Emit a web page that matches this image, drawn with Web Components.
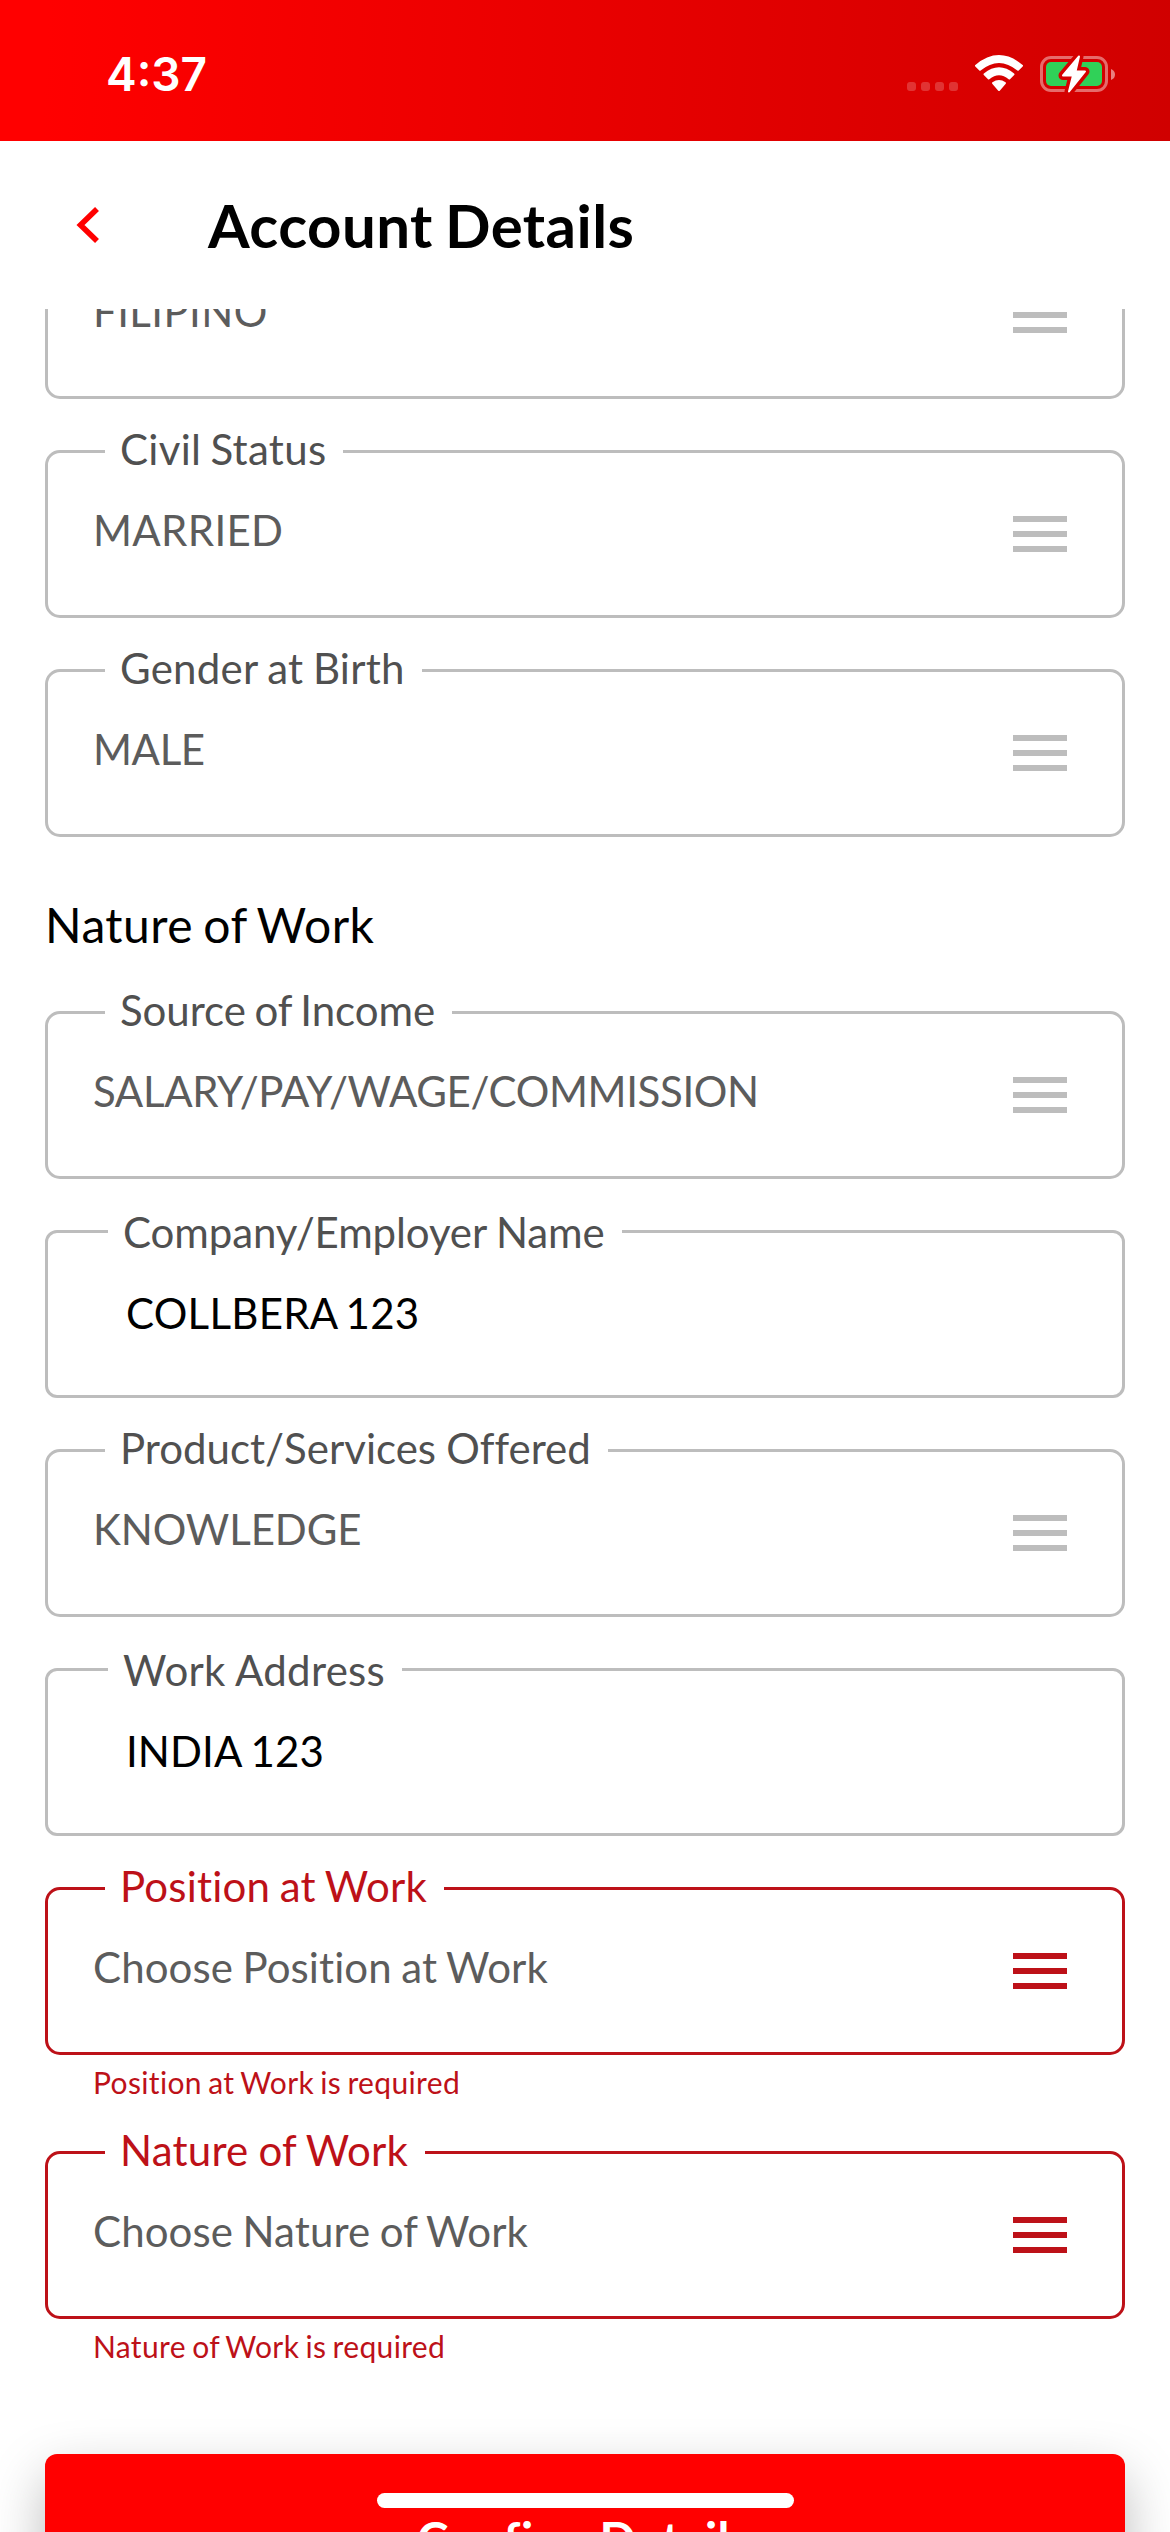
<!DOCTYPE html>
<html lang="en">
<head>
<meta charset="utf-8">
<title>Account Details</title>
<style>
html,body{margin:0;padding:0}
body{width:1170px;height:2532px;overflow:hidden;background:#fff;font-family:Lato,"Open Sans",sans-serif;font-variant-ligatures:none;color:#000}
</style>
</head>
<body>
<account-screen>
  <status-bar slot="top" time="4:37"></status-bar>
  <page-header slot="top">Account Details</page-header>
  <form-field kind="select" spacing=".4 0">FILIPINO</form-field>
  <form-field kind="select" label="Civil Status" label-spacing=".3 -1.9" spacing=".33 0">MARRIED</form-field>
  <form-field kind="select" label="Gender at Birth" label-spacing=".25 -1.45" spacing="-.4 0">MALE</form-field>
  <section-title>Nature of Work</section-title>
  <form-field kind="select" label="Source of Income" label-spacing="-.05 -2.1" spacing="-.37 0">SALARY/PAY/WAGE/COMMISSION</form-field>
  <form-field kind="input" label="Company/Employer Name" label-spacing="-.1 -1" spacing=".25 -2.4">COLLBERA 123</form-field>
  <form-field kind="select" label="Product/Services Offered" label-spacing="0 -.5" spacing="-.1 0">KNOWLEDGE</form-field>
  <form-field kind="input" label="Work Address" label-spacing=".3 -.4" spacing=".1 -1.3">INDIA 123</form-field>
  <form-field kind="select" error="Position at Work is required" label="Position at Work" label-spacing=".2 -1.4" spacing=".08 -1.3">Choose Position at Work</form-field>
  <form-field kind="select" error="Nature of Work is required" label="Nature of Work" label-spacing=".22 -.9" spacing=".1 -1.4">Choose Nature of Work</form-field>
  <primary-button>Confirm Details</primary-button>
</account-screen>
<script>
const define = (name, render) => customElements.define(name, class extends HTMLElement {
  constructor() { super(); this.attachShadow({ mode: 'open' }); }
  connectedCallback() { this.shadowRoot.innerHTML = render(this); }
});

// "letter word" pair of pixel values -> CSS declarations
const spacing = pair => {
  const [letter, word] = (pair || '0 0').split(' ');
  return `letter-spacing:${letter}px;word-spacing:${word}px`;
};

define('account-screen', () => `
<style>
:host{display:flex;flex-direction:column;width:1170px;height:2532px;overflow:hidden;position:relative}
main{flex:1;min-height:0;overflow:hidden;display:flex;flex-direction:column;padding:0 45px}
.scrolled{display:flex;flex-direction:column;margin-top:-78px}
.home{position:absolute;left:377px;top:2493px;width:417px;height:15px;border-radius:8px;background:#fff}
</style>
<slot name="top"></slot>
<main><div class="scrolled"><slot></slot></div></main>
<div class="home"></div>`);

define('status-bar', el => `
<style>
:host{display:flex;box-sizing:border-box;height:141px;flex:none;padding:0 54px 0 106px;justify-content:space-between;background:linear-gradient(92deg,#f00 4%,#d00000 100%)}
.time{font:600 46px/56px Inter,sans-serif;font-feature-settings:"case";color:#fff;margin-top:46px}
svg{display:block;margin-top:50px}
</style>
<span class="time">${el.getAttribute('time')}</span>
<svg width="212" height="46" viewBox="904 50 212 46">
  <g fill="#fff" opacity=".2"><rect x="907" y="82" width="9" height="9" rx="3"/><rect x="921" y="82" width="9" height="9" rx="3"/><rect x="935" y="82" width="9" height="9" rx="3"/><rect x="949" y="82" width="9" height="9" rx="3"/></g>
  <g fill="#fff" stroke="#fff" stroke-width="2" stroke-linejoin="round">
    <path d="M976 65.700Q999 46.500 1022 65.700L1018 69.700Q999 54 980 69.700Z"/>
    <path d="M984.500 74.300Q999 62.500 1013.500 74.300L1009.300 78.500Q999 70 988.700 78.500Z"/>
    <path d="M993 83Q999 79 1005 83L999 90Z"/>
  </g>
  <rect x="1041.500" y="57.500" width="65" height="33" rx="9.500" fill="none" stroke="#fff" stroke-opacity=".42" stroke-width="3"/>
  <path d="M1111 69Q1115 70.500 1115 74.500Q1115 78.500 1111 80Z" fill="#fff" opacity=".5"/>
  <rect x="1046" y="62" width="56" height="24" rx="5" fill="#30d158"/>
  <path d="M1079 56.500L1063 75.500H1073L1069 91.500L1085 71.500H1075.500Z" fill="#d50000" stroke="#d50000" stroke-width="9" stroke-linejoin="round"/>
  <path d="M1079 56.500L1063 75.500H1073L1069 91.500L1085 71.500H1075.500Z" fill="#fff" stroke="#fff" stroke-width="2" stroke-linejoin="round"/>
</svg>`);

define('page-header', () => `
<style>
:host{display:flex;flex:none;box-sizing:border-box;height:168px;padding-left:76px;align-items:flex-start;background:#fff}
svg{margin-top:65px;margin-right:107px;flex:none}
h1{margin:48px 0 0;font-size:60px;line-height:72px;font-weight:700;white-space:nowrap;${spacing('.45 -2.9')}}
</style>
<svg width="25" height="38" viewBox="0 0 25 38"><path d="M21 3L4.500 19L21 35" fill="none" stroke="#f00" stroke-width="5.600"/></svg>
<h1><slot></slot></h1>`);

define('section-title', () => `
<style>
:host{display:block}
h2{margin:8px 0 57px;font-size:48px;line-height:58px;font-weight:400;${spacing('.45 -2.4')}}
</style>
<h2><slot></slot></h2>`);

define('menu-icon', () => `
<style>
:host{display:flex;flex-direction:column;gap:9px;width:54px}
i{display:block;height:6px;background:currentColor}
</style><i></i><i></i><i></i>`);

define('form-field', el => {
  const label = el.getAttribute('label') || '';
  const error = el.getAttribute('error');
  const input = el.getAttribute('kind') === 'input';
  return `
<style>
:host{display:block;margin-bottom:51px;--line:${error ? '#bd1118' : '#bdbdbd'}}
.box{display:flex;flex-direction:column;box-sizing:border-box;height:168px;border:3px solid var(--line);border-radius:${input ? 12 : 15}px}
label{align-self:flex-start;height:50px;line-height:50px;font-size:42px;white-space:nowrap;background:#fff;
  margin:${input ? '-26px 0 -1px 60px' : '-29px 0 -1px 57px'};padding:0 17px 0 15px;color:${error ? '#bd1118' : '#505050'};${spacing(el.getAttribute('label-spacing'))}}
label.blank{visibility:hidden}
.row{display:flex;justify-content:space-between;align-items:flex-start;padding:0 55px 0 ${input ? 78 : 45}px}
.value{font-size:42px;line-height:50px;margin-top:32px;white-space:nowrap;color:${input ? '#000' : '#5c5c5c'};${spacing(el.getAttribute('spacing'))}}
menu-icon{margin-top:43px;color:var(--line)}
.help{margin:10px 0 0 48px;font-size:30px;line-height:35px;color:#bd1118;${spacing('.35 -1.8')}}
</style>
<div class="box">
  <label class="${label ? '' : 'blank'}">${label}</label>
  <div class="row"><span class="value"><slot></slot></span>${input ? '' : '<menu-icon></menu-icon>'}</div>
</div>
${error ? `<div class="help">${error}</div>` : ''}`;
});

define('primary-button', () => `
<style>
:host{display:block;margin-top:39px}
button{display:block;box-sizing:border-box;width:1080px;height:168px;border:0;border-radius:12px;background:#f00;color:#fff;font:700 48px/58px Lato,sans-serif;font-variant-ligatures:none;padding:2px 2px 0 0;
  ${spacing('.4 -5')};box-shadow:0 22px 54px rgba(0,0,0,.27)}
</style>
<button><slot></slot></button>`);
</script>
</body>
</html>
